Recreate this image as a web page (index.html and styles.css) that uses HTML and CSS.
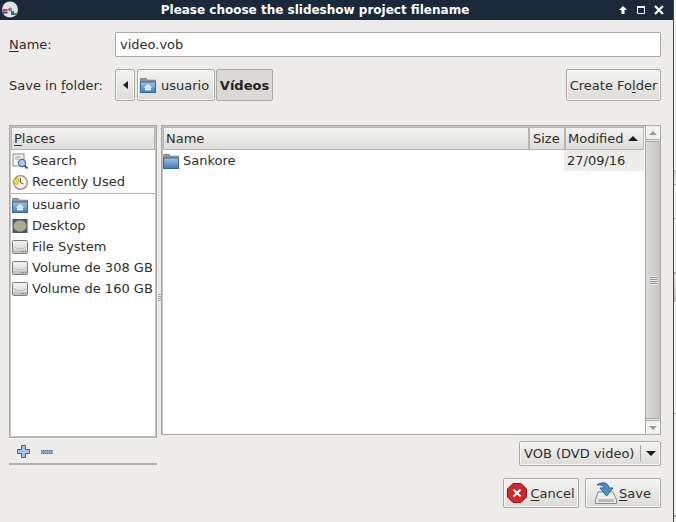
FILE: index.html
```html
<!DOCTYPE html>
<html lang="en">
<head>
<meta charset="utf-8">
<title>Please choose the slideshow project filename</title>
<link rel="stylesheet" href="styles.css">
</head>
<body>
<svg class="defs" width="0" height="0" aria-hidden="true">
  <defs>
    <linearGradient id="fold" x1="0" y1="0" x2="0" y2="1"><stop offset="0" stop-color="#a6c2e0"/><stop offset="1" stop-color="#3f7cbb"/></linearGradient>
    <linearGradient id="disk" x1="0" y1="0" x2="0" y2="1"><stop offset="0" stop-color="#f4f4f2"/><stop offset="1" stop-color="#d2d2ce"/></linearGradient>
    <symbol id="i-home" viewBox="0 0 16 16">
      <path d="M.6 5V1.500h5.600l1.300 1.700h8V6H.6z" fill="#979794" stroke="#6b6b68" stroke-width=".7"/>
      <rect x=".5" y="5" width="15" height="10.500" fill="url(#fold)" stroke="#34659b"/>
      <path d="M8 6.800 12.500 10.400H3.500z M5 10.400h6v3H5z" fill="#d7e4f1"/>
    </symbol>
    <symbol id="i-folder" viewBox="0 0 16 16">
      <path d="M.6 5V1.500h5.600l1.300 1.700h8V6H.6z" fill="#979794" stroke="#6a6a68" stroke-width=".7"/>
      <rect x=".5" y="5" width="15" height="10.500" fill="url(#fold)" stroke="#34659b"/>
    </symbol>
    <symbol id="i-disk" viewBox="0 0 16 16">
      <rect x=".5" y="1.500" width="15" height="13" rx="1" fill="url(#disk)" stroke="#7c7c7a"/>
      <path d="M1.500 7.500 5 9.600h6l3.500-2.100" fill="none" stroke="#bdbdb9"/>
      <rect x="1" y="11" width="14" height="3" fill="#c2c2be"/>
      <path d="M9 12.500h5" stroke="#77776f" stroke-dasharray="1 1"/>
    </symbol>
  </defs>
</svg>
<div class="window">
  <header class="titlebar">
    <svg class="appicon" width="18" height="18" viewBox="0 0 18 18" aria-hidden="true">
      <circle cx="9" cy="8.500" r="8" fill="#e2e2e2"/><circle cx="9" cy="8.500" r="2" fill="#7c828b"/>
      <rect x="1.500" y="8" width="5" height="2" fill="#b44"/><rect x="1.500" y="10.500" width="5" height="2" fill="#447"/>
      <rect x="10" y="10" width="3" height="4" fill="#3a5fb0"/><rect x="13" y="12" width="3" height="2" fill="#4a9a3a"/>
    </svg>
    <span class="title">Please choose the slideshow project filename</span>
    <div class="wm">
      <svg width="8" height="8" viewBox="0 0 8 8" aria-hidden="true"><path d="M4 0 8 4H5.500v4h-3V4H0z" fill="#fff"/></svg>
      <svg width="8" height="8" viewBox="0 0 8 8" aria-hidden="true"><path d="M.5.500h7v7h-7z" fill="none" stroke="#fff"/><path d="M0 1h8" stroke="#fff" stroke-width="2"/></svg>
      <svg width="10" height="10" viewBox="0 0 10 10" aria-hidden="true"><path d="M1 1 9 9M9 1 1 9" stroke="#fff" stroke-width="2.200"/></svg>
    </div>
  </header>
  <main class="content">
    <div class="row-name">
      <label class="lbl"><u>N</u>ame:</label>
      <div class="entry">video.vob</div>
    </div>
    <div class="row-folder">
      <label class="lbl"><span>Save in <u>f</u>older:</span></label>
      <div class="path">
        <button class="btn back"><span class="tri-left"></span></button>
        <button class="btn crumb"><svg class="ic" aria-hidden="true"><use href="#i-home"/></svg>usuario</button>
        <button class="btn crumb active">Vídeos</button>
      </div>
      <button class="btn create">Create Fo<u>l</u>der</button>
    </div>
    <div class="panes">
      <section class="side">
        <div class="places">
          <div class="hdr places-hdr"><u>P</u>laces</div>
          <ul class="list">
            <li><svg class="ic" viewBox="0 0 16 16" aria-hidden="true"><rect x="1" y="1" width="11" height="12" fill="#f4f4f2" stroke="#8a8a88"/><path d="M3 4h6M3 6h4" stroke="#9a9a98"/><circle cx="10" cy="10" r="3.600" fill="#a9c6e4" stroke="#4a6f9b" stroke-width="1.200"/><path d="m12.500 12.500 3 3" stroke="#4a5f7b" stroke-width="2"/></svg>Search</li>
            <li><svg class="ic" viewBox="0 0 16 16" aria-hidden="true"><circle cx="8.500" cy="8.500" r="6.800" fill="#f3f1e8" stroke="#8d8d85" stroke-width="1.300"/><path d="M8.500 4v4.500l3 1.500" fill="none" stroke="#6d5a20"/><path d="M.5 7 5 3.500l3 3L4.500 11z" fill="#f3d23c" stroke="#a98a1a" stroke-width=".6"/></svg>Recently Used</li>
            <li class="sep"></li>
            <li><svg class="ic" aria-hidden="true"><use href="#i-home"/></svg>usuario</li>
            <li><svg class="ic" viewBox="0 0 16 16" aria-hidden="true"><rect x=".5" y="1" width="15" height="14" fill="#3f5878"/><ellipse cx="8" cy="8" rx="6.800" ry="5.800" fill="#aeae8c" stroke="#6f6f58" stroke-width=".7"/></svg>Desktop</li>
            <li><svg class="ic" aria-hidden="true"><use href="#i-disk"/></svg>File System</li>
            <li><svg class="ic" aria-hidden="true"><use href="#i-disk"/></svg>Volume de 308 GB</li>
            <li><svg class="ic" aria-hidden="true"><use href="#i-disk"/></svg>Volume de 160 GB</li>
          </ul>
        </div>
        <div class="tools">
          <svg width="13" height="13" viewBox="0 0 13 13" aria-hidden="true"><path d="M4.500.500h4v4h4v4h-4v4h-4v-4h-4v-4h4z" fill="#a9c4e2" stroke="#2f65ab"/></svg>
          <svg width="12" height="4" viewBox="0 0 12 4" aria-hidden="true"><rect width="12" height="4" fill="#8fa3bd"/><path d="M0 .5h12M0 3.500h12" stroke="#4f6f99" stroke-dasharray="1 1"/></svg>
        </div>
      </section>
      <div class="grip"><span class="grip-dots"></span></div>
      <section class="files-col">
        <div class="files">
          <div class="table">
            <div class="heads">
              <div class="hdr h-name">Name</div>
              <div class="hdr h-size">Size</div>
              <div class="hdr h-mod">Modified <span class="tri-up"></span></div>
            </div>
            <div class="file">
              <div class="f-name"><svg class="ic" aria-hidden="true"><use href="#i-folder"/></svg>Sankore</div>
              <div class="f-mod">27/09/16</div>
            </div>
          </div>
          <div class="scroll">
            <div class="s-arrow"><span class="tri-up small"></span></div>
            <div class="thumb"><span class="dots"></span></div>
            <div class="s-arrow"><span class="tri-down small"></span></div>
          </div>
        </div>
        <div class="filter-row">
          <button class="btn combo"><span class="combo-t">VOB (DVD video)</span><span class="combo-a"><span class="tri-down"></span></span></button>
        </div>
      </section>
    </div>
    <div class="actions">
      <button class="btn act"><svg width="20" height="20" viewBox="0 0 20 20" aria-hidden="true"><path d="M6 .5h8L19.500 6v8L14 19.500H6L.5 14V6z" fill="#d3272e" stroke="#8d1318"/><path d="M6.500 6.500l7 7M13.500 6.500l-7 7" stroke="#fff" stroke-width="2"/></svg><span><u>C</u>ancel</span></button>
      <button class="btn act save"><svg width="22" height="22" viewBox="0 0 22 22" aria-hidden="true"><path d="M3 10 .5 18v3.500h21V18L18 10z" fill="#eeeeea" stroke="#8a8a86"/><rect x="3" y="17" width="16" height="3" fill="#bcbcb8"/><path d="M2 3c5-3.500 11-3 12 3h4l-6.500 8L5 6h4C9 3.500 5.500 2.500 2 3z" fill="#4f90c8" stroke="#2a5f94"/></svg><span><u>S</u>ave</span></button>
    </div>
  </main>
</div>
</body>
</html>
```
FILE: styles.css
```css
* { box-sizing: border-box; }
html, body { margin: 0; height: 100%; }
body {
  font-family: "DejaVu Sans", sans-serif;
  font-size: 13px;
  color: #2e2e2c;
  overflow: hidden;
  background: linear-gradient(#f4f4f2 0 170px, #c9c8c4 170px, #eeeeec 184px, #a9a8a4 184px 185px, #f4f4f2 185px 218px, #a9a8a4 218px 219px, #f4f4f2 219px 272px, #a9a8a4 272px 273px, #e4e3e0 275px, #bdbcb8 302px, #f4f4f2 302px 413px, #a9a8a4 413px 414px, #f0f0ee 414px 515px, #a9a8a4 515px 517px, #f0f0ee 517px);
}
.defs { position: absolute; }
.window { width: 674px; height: 522px; display: flex; flex-direction: column; background: #edecea; border-right: 1px solid #3c4652; }
u { text-underline-offset: 2px; text-decoration-thickness: 1px; }
.titlebar { height: 20px; background: #1a283a; color: #fff; display: flex; align-items: center; padding: 0 9px 0 1px; flex: none; }
.appicon { flex: none; }
.title { flex: 1; text-align: center; font-weight: 700; font-size: 12px; padding-right: 8px; }
.wm { display: flex; gap: 9px; align-items: center; }
.wm svg:first-child { margin-right: 1px; }
.content { flex: 1; padding: 12px 12px 14px 9px; display: flex; flex-direction: column; }
.lbl { width: 106px; flex: none; display: block; }
.row-name { display: flex; align-items: center; height: 25px; }
.entry { flex: 1; height: 25px; background: #fff; border: 1px solid #a9a8a2; border-radius: 1px; padding: 0 4px; line-height: 23px; }
.row-folder { display: flex; align-items: center; height: 32px; margin-top: 12px; justify-content: space-between; }
.path { display: flex; flex: 1; gap: 1px; }
.btn { font: inherit; color: inherit; height: 32px; border: 1px solid #a9a8a2; border-radius: 2px; background: linear-gradient(#f3f3f1, #dddcd8); padding: 0; display: flex; align-items: center; justify-content: center; box-shadow: inset 0 0 0 1px #f8f8f6; }
.back { width: 20px; margin-right: 1px; }
.tri-left { width: 0; height: 0; border: 4px solid transparent; border-right: 5px solid #1d1d1b; border-left: 0; }
.crumb { padding: 0 0 0 2px; gap: 5px; width: 78px; justify-content: flex-start; }
.crumb.active { width: 57px; padding: 0; font-weight: 700; color: #222; background: #dad9d5; box-shadow: none; justify-content: center; }
.ic { width: 16px; height: 16px; flex: none; }
.create { width: 95px; }
.panes { display: flex; margin-top: 24px; flex: 1; min-height: 0; }
.side { width: 148px; display: flex; flex-direction: column; flex: none; }
.places { height: 313px; background: #fff; border: 1px solid #a9a8a2; padding: 1px; box-shadow: inset 0 0 0 1px #c4c3be, 0 1px 0 #fff; display: flex; flex-direction: column; }
.hdr { height: 23px; background: linear-gradient(#f2f2f0, #dedddA); border: 1px solid #b6b5b0; display: flex; align-items: center; padding-left: 2px; flex: none; }
.places-hdr { margin: 0; }
.list { list-style: none; margin: 0; padding: 0; }
.list li { height: 21px; display: flex; align-items: center; gap: 4px; padding-left: 1px; white-space: nowrap; }
.list li.sep { height: 1px; background: #b6b5b0; margin: 1px 0 0; padding: 0; }
.tools { height: 27px; border-bottom: 2px solid #b0afaa; display: flex; align-items: center; gap: 11px; padding: 2px 0 0 8px; }
.grip { width: 4px; flex: none; display: flex; align-items: center; justify-content: center; padding-bottom: 8px; }
.grip-dots { width: 3px; height: 8px; background: repeating-linear-gradient(#a9a8a2 0 1px, #edecea 1px 2px); }
.files-col { flex: 1; display: flex; flex-direction: column; min-width: 0; }
.files { height: 310px; display: flex; background: #fff; border: 1px solid #a9a8a2; border-right: 0; box-shadow: inset 1px 1px 0 #c4c3be; flex: none; }
.table { flex: 1; min-width: 0; }
.heads { display: flex; padding: 1px 0 0 1px; }
.h-name { width: 366px; }
.h-size { width: 36px; padding-left: 3px; }
.h-mod { width: 79px; gap: 5px; }
.tri-up { width: 0; height: 0; border: 5px solid transparent; border-bottom: 5px solid #1d1d1b; border-top: 0; }
.tri-down { width: 0; height: 0; border: 5px solid transparent; border-top: 5px solid #1d1d1b; border-bottom: 0; }
.tri-up.small { border-width: 0 4px 4px; border-color: transparent transparent #9b9a95; }
.tri-down.small { border-width: 4px 4px 0; border-color: #9b9a95 transparent transparent; }
.file { height: 21px; display: flex; padding-left: 1px; }
.f-name { width: 401px; display: flex; align-items: center; gap: 4px; }
.f-mod { width: 80px; background: #edecea; padding-left: 3px; line-height: 21px; }
.scroll { width: 16px; flex: none; margin-top: -1px; margin-bottom: -1px; background: #f0efed; border: 1px solid #a9a8a2; display: flex; flex-direction: column; gap: 1px; }
.s-arrow { height: 14px; flex: none; display: flex; align-items: center; justify-content: center; background: #f2f2f0; border-bottom: 1px solid #a9a8a2; }
.s-arrow:last-child { border-bottom: 0; border-top: 1px solid #a9a8a2; }
.thumb { flex: 1; background: linear-gradient(90deg, #dadad6, #c6c5c1); border-top: 1px solid #a9a8a2; border-bottom: 1px solid #a9a8a2; display: flex; align-items: center; justify-content: center; }
.dots { width: 7px; height: 9px; background: repeating-linear-gradient(#eee 0 1px, #8f8e8a 1px 2px); }
.filter-row { display: flex; justify-content: flex-end; margin-top: 6px; }
.combo { width: 142px; height: 25px; justify-content: flex-start; }
.combo-t { flex: 1; text-align: left; padding-left: 4px; }
.combo-a { width: 20px; height: 17px; border-left: 1px solid #a9a8a2; display: flex; align-items: center; justify-content: center; }
.actions { display: flex; justify-content: flex-end; gap: 6px; flex: none; }
.act { width: 76px; height: 30px; gap: 3px; }
.act.save { gap: 2px; }
```
